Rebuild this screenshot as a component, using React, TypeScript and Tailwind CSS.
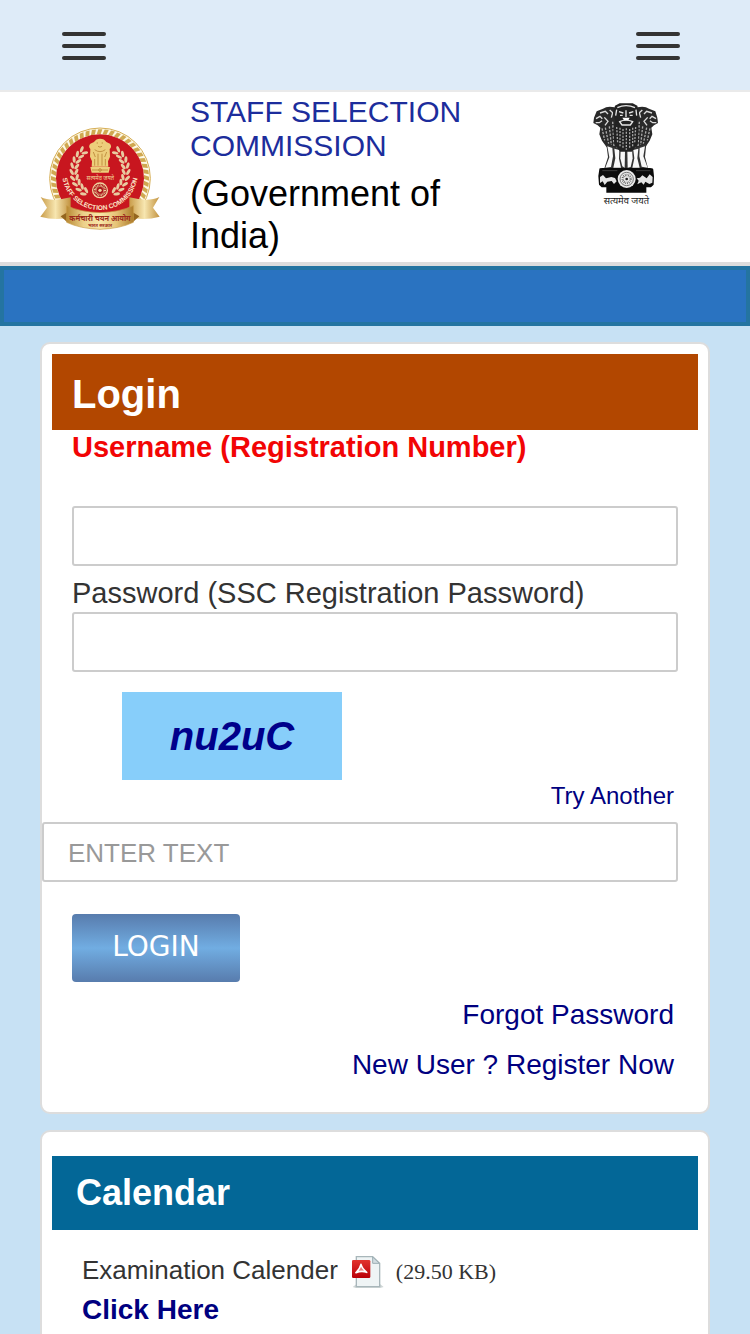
import { useState } from "react";

const SANS = "font-['Liberation_Sans',Arial,sans-serif]";

const RING_TEETH = Array.from({ length: 48 }, (_, i) => i * 7.5);
const LEAVES = Array.from({ length: 9 }, (_, i) => 36 + i * 13);

function MenuButton({ label }: { label: string }) {
  return (
    <button type="button" aria-label={label} className="flex w-11 flex-col gap-2">
      <span className="h-1 w-full rounded-full bg-[#333]" />
      <span className="h-1 w-full rounded-full bg-[#333]" />
      <span className="h-1 w-full rounded-full bg-[#333]" />
    </button>
  );
}

function CommissionLogo() {
  return (
    <svg
      viewBox="30 30 360 315"
      className="h-[105px] w-[120px] shrink-0"
      role="img"
      aria-label="Staff Selection Commission"
    >
      <defs>
        <linearGradient id="ribbon" x1="0" x2="1">
          <stop offset="0" stopColor="#b98a35" />
          <stop offset="0.25" stopColor="#ecd08a" />
          <stop offset="0.5" stopColor="#f8e7a9" />
          <stop offset="0.75" stopColor="#e6c376" />
          <stop offset="1" stopColor="#ad7c2c" />
        </linearGradient>
        <linearGradient id="tail" x1="0" x2="1">
          <stop offset="0" stopColor="#c99c49" />
          <stop offset="0.5" stopColor="#f7e6b0" />
          <stop offset="1" stopColor="#c2923f" />
        </linearGradient>
        <path id="logo-arc" d="M96 171 A114 114 0 0 0 324 171" />
      </defs>
      <circle cx="210" cy="190" r="151" fill="#fdf8e4" stroke="#d6ae55" strokeWidth="3" />
      {RING_TEETH.map((angle) => (
        <path
          key={angle}
          d="M200 58 L205 43 L217 43 L212 58 Z"
          fill="#d0a850"
          transform={`rotate(${angle} 210 190)`}
        />
      ))}
      <circle cx="210" cy="190" r="132" fill="#c8161f" />
      {LEAVES.map((angle) => (
        <g key={angle} fill="#e8cba0">
          <g transform={`rotate(${angle} 210 168)`}>
            <ellipse cx="210" cy="239" rx="10" ry="4.5" transform="rotate(28 210 239)" />
            <ellipse cx="210" cy="253" rx="10" ry="4.5" transform="rotate(-28 210 253)" />
          </g>
          <g transform={`rotate(${-angle} 210 168)`}>
            <ellipse cx="210" cy="239" rx="10" ry="4.5" transform="rotate(-28 210 239)" />
            <ellipse cx="210" cy="253" rx="10" ry="4.5" transform="rotate(28 210 253)" />
          </g>
        </g>
      ))}
      <g fill="#edce7b">
        <path d="M192 81 Q198 71 210 71 Q223 71 229 81 L240 86 Q247 95 239 102 L240 125 L234 139 L235 155 H185 L186 139 L180 125 L181 102 Q174 94 181 86 Z" />
        <path d="M181 156 H240 L236 173 H185 Z" />
      </g>
      <g fill="none" stroke="#b98636" strokeWidth="2.5">
        <path d="M200 84 H204 M215 84 H219 M204 94 Q210 99 216 94 M194 104 Q210 116 226 104 M190 111 L196 126 M230 111 L224 126 M204 116 V152 M216 116 V152 M194 132 V152 M226 132 V152 M186 165 H234" />
        <circle cx="210" cy="165" r="4" />
      </g>
      <text
        x="211"
        y="194"
        textAnchor="middle"
        fill="#f3d79a"
        className="font-['Noto_Sans',sans-serif] text-[17px]"
      >
        सत्यमेव जयते
      </text>
      <circle cx="210" cy="226" r="24" fill="#f0d6a2" />
      <circle cx="210" cy="226" r="20" fill="#a9141a" />
      <circle cx="210" cy="226" r="14" fill="none" stroke="#f0d6a2" strokeWidth="8" strokeDasharray="2 2" />
      <circle cx="210" cy="226" r="5" fill="#f0d6a2" />
      <text fill="#fbe6c8" className="font-['Liberation_Sans',Arial,sans-serif] text-[20px] font-bold">
        <textPath href="#logo-arc" startOffset="50%" textAnchor="middle">
          STAFF SELECTION COMMISSION
        </textPath>
      </text>
      <path d="M32 246 Q64 262 122 247 V307 Q76 318 31 305 L51 278 Z" fill="url(#tail)" />
      <path d="M388 246 Q356 262 298 247 V307 Q344 318 389 305 L369 278 Z" fill="url(#tail)" />
      <path d="M92 304 L112 322 L122 286 Z M328 304 L308 322 L298 286 Z" fill="#94661f" />
      <path
        d="M110 272 Q150 291 210 293 Q270 291 310 272 V322 Q270 341 210 343 Q150 341 110 322 Z"
        fill="url(#ribbon)"
        stroke="#c99b45"
        strokeWidth="2"
      />
      <text
        x="210"
        y="317"
        textAnchor="middle"
        fill="#9c2a1c"
        className="font-['Noto_Sans',sans-serif] text-[22px] font-bold"
      >
        कर्मचारी चयन आयोग
      </text>
      <text
        x="210"
        y="335"
        textAnchor="middle"
        fill="#9c2a1c"
        className="font-['Noto_Sans',sans-serif] text-[14px] font-bold"
      >
        भारत सरकार
      </text>
    </svg>
  );
}

function NationalEmblem() {
  return (
    <svg
      viewBox="36 30 204 315"
      className="h-[105px] w-[68px] shrink-0"
      role="img"
      aria-label="National emblem of India"
    >
      {/* side lions */}
      <path d="M104 49 Q82 44 69 53 L50 61 L42 80 L40 96 L53 103 L61 110 L58 130 L66 149 L80 169 L110 178 L113 80 Z" fill="#292929" />
      <path d="M172 49 Q194 44 207 53 L226 61 L232 80 L234 96 L222 103 L214 110 L217 130 L209 149 L196 169 L166 178 L161 80 Z" fill="#292929" />
      <g fill="none" stroke="#ddd" strokeWidth="4">
        <path d="M48 83 L60 76 L67 83 M47 95 L58 95 L66 89 M60 66 L76 61 L84 69 M73 79 L84 91 L75 103 M89 57 L98 65 L94 80" />
        <path d="M228 83 L216 76 L209 83 M229 95 L218 95 L210 89 M216 66 L200 61 L192 69 M203 79 L192 91 L201 103 M187 57 L178 65 L182 80" />
      </g>
      <g fill="none" stroke="#aaa" strokeWidth="4" strokeDasharray="7 4">
        <path d="M66 112 L74 148 M76 110 L86 158 M88 106 L94 162 M98 92 L102 168" />
        <path d="M210 112 L202 148 M200 110 L190 158 M188 106 L182 162 M178 92 L174 168" />
      </g>
      {/* legs */}
      <path d="M79 160 L108 170 L168 170 L199 158 L195 198 L204 232 L73 232 L84 198 Z" fill="#333" />
      <g fill="#f8f8f8">
        <path d="M82 166 L97 171 L99 196 L93 228 L76 230 L88 199 Z" />
        <path d="M103 173 L118 177 L117 203 L123 230 L100 230 L106 202 Z" />
        <path d="M122 176 L135 180 L134 230 L127 226 L121 202 Z" />
        <path d="M142 180 L156 176 L158 202 L152 228 L143 230 Z" />
        <path d="M160 177 L175 173 L172 202 L179 230 L157 230 L163 202 Z" />
        <path d="M179 171 L195 166 L190 196 L203 230 L185 227 L178 196 Z" />
      </g>
      {/* centre lion */}
      <path d="M105 44 L119 37 H158 L172 44 L177 65 L170 91 L176 116 L173 160 L155 182 H121 L103 160 L100 116 L106 91 L99 65 Z" fill="#222" />
      <g fill="none" stroke="#e6e6e6" strokeWidth="4">
        <path d="M112 50 Q138 38 165 50 M110 56 L107 74 M168 56 L170 74 M117 62 L130 66 M147 66 L160 62 M120 73 H128 M149 73 H158" />
        <path d="M138 58 V78 M119 92 Q138 83 158 92 L151 102 H126 Z" />
      </g>
      <g fill="none" stroke="#a5a5a5" strokeWidth="4" strokeDasharray="6 4">
        <path d="M110 108 L113 156 M120 110 V168 M129 114 V174 M139 112 V176 M149 114 V174 M158 110 V168 M167 108 L164 156" />
      </g>
      <path d="M127 80 H149 L145 88 H132 Z" fill="#fff" />
      {/* abacus and wheel */}
      <path d="M58 235 Q57 231 67 231 H210 Q221 231 220 237 L222 256 L221 281 L213 289 H199 V305 H79 V289 H65 L57 281 L55 255 Z" fill="#0b0b0b" />
      <circle cx="140" cy="264" r="27" fill="#e9e9e9" />
      <circle cx="140" cy="264" r="20" fill="none" stroke="#777" strokeWidth="3" />
      <circle cx="140" cy="264" r="12" fill="none" stroke="#555" strokeWidth="7" strokeDasharray="2 3" />
      <circle cx="140" cy="264" r="4" fill="#222" />
      <path d="M60 258 L69 252 L78 262 L94 258 L105 261 L110 271 L102 279 L95 270 L82 272 L74 282 L68 271 L60 276 Z" fill="#e4e4e4" />
      <path d="M218 258 L209 250 L200 262 L187 253 L180 260 L170 262 L176 269 L172 280 L184 274 L191 281 L196 272 L208 279 L217 275 Z" fill="#e4e4e4" />
      <path d="M67 239 H112 M168 239 H211" stroke="#555" strokeWidth="2" />
      <text
        x="139"
        y="338"
        textAnchor="middle"
        fill="#222"
        className="font-['Noto_Sans',sans-serif] text-[28px]"
      >
        सत्यमेव जयते
      </text>
    </svg>
  );
}

function PdfIcon() {
  return (
    <svg viewBox="0 0 96 96" className="size-8" aria-hidden="true">
      <defs>
        <linearGradient id="pdf-red" x1="0" y1="0" x2="0" y2="1">
          <stop offset="0" stopColor="#e2332d" />
          <stop offset="1" stopColor="#b90008" />
        </linearGradient>
      </defs>
      <path d="M2 93 L14 84 H84 L95 93 L84 96 H12 Z" fill="#cfd6d6" />
      <path d="M13 2 H62 L83 22 V92 H13 Z" fill="#eff4f5" stroke="#a8b6ba" strokeWidth="4" />
      <path d="M62 3 V22 H82 Z" fill="#d2dde1" stroke="#9caeb4" strokeWidth="3" />
      <rect x="0" y="12" width="55" height="54" rx="4" fill="url(#pdf-red)" />
      <path
        d="M27 25 C25 35 18 44 12 50 C22 46 34 45 44 49 C36 42 29 34 27 25 Z"
        fill="#e9807a"
        stroke="#fff"
        strokeWidth="5"
        strokeLinejoin="round"
      />
    </svg>
  );
}

const inputClasses =
  "block h-[60px] w-full rounded-[3px] border-2 border-[#ccc] bg-white px-6 pt-0.5 text-[26px] text-[#333] placeholder:text-[#999] outline-none";

function LoginCard() {
  const [username, setUsername] = useState("");
  const [password, setPassword] = useState("");
  const [captcha, setCaptcha] = useState("");

  return (
    <section className="rounded-[10px] border-2 border-[#ddd] bg-white pt-2.5 pb-[22px]">
      <h2 className="mx-2.5 bg-[#b24700] px-5 pt-4 pb-3 text-[40px] leading-12 font-bold text-white">
        Login
      </h2>
      <form onSubmit={(e) => e.preventDefault()} className="pr-[30px]">
        <div className="pl-[30px]">
          <label
            htmlFor="username"
            className="mb-[42px] block text-[29px] leading-[34px] font-bold text-[#f20505]"
          >
            Username (Registration Number)
          </label>
          <input
            id="username"
            type="text"
            value={username}
            onChange={(e) => setUsername(e.target.value)}
            className={inputClasses}
          />
          <label htmlFor="password" className="mt-2.5 mb-0.5 block text-[29px] leading-[34px] text-[#333]">
            Password (SSC Registration Password)
          </label>
          <input
            id="password"
            type="password"
            value={password}
            onChange={(e) => setPassword(e.target.value)}
            className={inputClasses}
          />
          <div className="mt-5 ml-[50px] flex h-[88px] w-[220px] items-center justify-center bg-[#87cefa] text-[40px] font-bold text-[#00008b] italic">
            nu2uC
          </div>
          <div className="pr-1 text-right">
            <a href="#another" className="text-[24px] leading-8 text-[#000080]">
              Try Another
            </a>
          </div>
        </div>
        <input
          type="text"
          aria-label="Enter text"
          placeholder="ENTER TEXT"
          value={captcha}
          onChange={(e) => setCaptcha(e.target.value)}
          className={`mt-2.5 ${inputClasses}`}
        />
        <button
          type="submit"
          className="mt-8 ml-[30px] block h-[68px] w-[168px] rounded-sm bg-linear-to-b from-[#587cad] via-[#71ade2] to-[#587cad] pb-0.5 font-['DejaVu_Sans',sans-serif] text-[28px] text-white"
        >
          LOGIN
        </button>
        <div className="mt-2 flex flex-col items-end pr-1 text-[28px] leading-[50px] text-[#000080]">
          <a href="#forgot">Forgot Password</a>
          <a href="#register">New User ? Register Now</a>
        </div>
      </form>
    </section>
  );
}

function CalendarCard() {
  return (
    <section className="rounded-[10px] border-2 border-[#ddd] bg-white px-2.5 pt-6 pb-8">
      <h2 className="bg-[#036797] px-6 py-4 text-[36px] leading-[42px] font-bold text-white">
        Calendar
      </h2>
      <div className="px-[30px] pt-5">
        <p className="flex items-center text-[26px] leading-10 text-[#333]">
          Examination Calender
          <span className="mr-3 ml-3.5 pt-1">
            <PdfIcon />
          </span>
          <span className="pt-1 font-['Liberation_Serif',serif] text-[22px] leading-8">(29.50 KB)</span>
        </p>
        <a href="#calendar" className="text-[28px] leading-10 font-bold text-[#000080]">
          Click Here
        </a>
      </div>
    </section>
  );
}

export default function App() {
  return (
    <div className={`h-screen overflow-hidden bg-[#c7e1f4] ${SANS}`}>
      <nav className="flex h-[92px] items-center justify-between border-b-2 border-[#eaeaea] bg-[#deebf8] pt-0.5 pr-[70px] pl-[62px]">
        <MenuButton label="Open menu" />
        <MenuButton label="Open quick links" />
      </nav>

      <header className="flex items-start border-b-4 border-[#ddd] bg-white pt-[3px] pr-[90px] pb-[5px] pl-10">
        <div className="mt-[30px]">
          <CommissionLogo />
        </div>
        <div className="ml-[30px] max-w-[300px]">
          <h1 className="text-[30px] leading-[34px] text-[#1c2d9c]">STAFF SELECTION COMMISSION</h1>
          <p className="mt-2.5 text-[36px] leading-[42px] text-black">(Government of India)</p>
        </div>
        <div className="mt-1.5 ml-auto">
          <NationalEmblem />
        </div>
      </header>
      <div className="h-[60px] border-4 border-[#2474a1] bg-[#2a73c1]" />

      <main className="flex flex-col gap-4 px-10 pt-4">
        <LoginCard />
        <CalendarCard />
      </main>
    </div>
  );
}
